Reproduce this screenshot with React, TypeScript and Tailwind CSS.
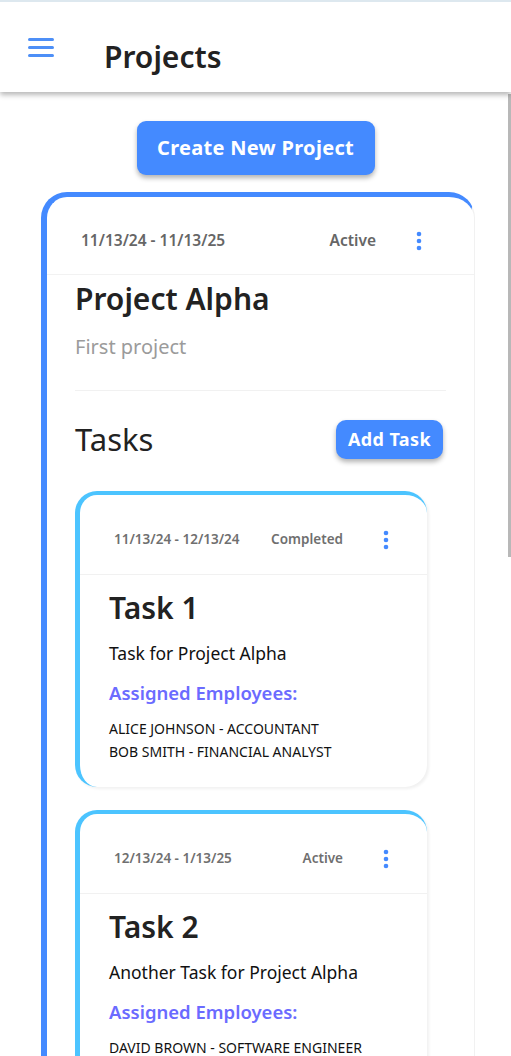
type Task = {
  title: string
  dates: string
  status: string
  description: string
  employees: string[]
}

const tasks: Task[] = [
  {
    title: 'Task 1',
    dates: '11/13/24 - 12/13/24',
    status: 'Completed',
    description: 'Task for Project Alpha',
    employees: ['Alice Johnson - Accountant', 'Bob Smith - Financial Analyst'],
  },
  {
    title: 'Task 2',
    dates: '12/13/24 - 1/13/25',
    status: 'Active',
    description: 'Another Task for Project Alpha',
    employees: ['David Brown - Software Engineer'],
  },
]

function Kebab() {
  return (
    <svg width="6" height="20" viewBox="0 0 6 20" className="text-[#448aff]">
      <circle cx="3" cy="3" r="2.3" fill="currentColor" />
      <circle cx="3" cy="10" r="2.3" fill="currentColor" />
      <circle cx="3" cy="17" r="2.3" fill="currentColor" />
    </svg>
  )
}

function TaskCard({ task }: { task: Task }) {
  return (
    <div className="w-[352px] rounded-[22px] border-l-[5px] border-t-[4px] border-[#4cc4ff] bg-white shadow-[2px_2px_3px_rgba(0,0,0,0.06)]">
      <div className="flex h-[80px] items-center border-b border-[#f1f1f1] pl-[34px] pr-[38px] pt-[10px]">
        <span className="text-[13.5px] font-semibold text-[#6f6f6f]">{task.dates}</span>
        <span className="ml-auto text-[13.5px] font-semibold text-[#6f6f6f]">{task.status}</span>
        <span className="ml-[40px]">
          <Kebab />
        </span>
      </div>
      <div className="pl-[29px] pr-4 pt-[13px] pb-[24px]">
        <h4 className="text-[30px] font-semibold leading-[40px] text-[#222]">{task.title}</h4>
        <p className="mt-[13px] text-[17.5px] leading-[24px] text-[#111]">{task.description}</p>
        <h5 className="mt-[16px] text-[18.5px] font-semibold leading-[24px] text-[#6b6bff]">
          Assigned Employees:
        </h5>
        <ul className="mt-[12px] text-[14px] uppercase leading-[23px] text-[#111]">
          {task.employees.map((e) => (
            <li key={e}>{e}</li>
          ))}
        </ul>
      </div>
    </div>
  )
}

export default function App() {
  return (
    <div
      className="relative h-[1056px] overflow-hidden border-t-2 border-[#dde8ef] bg-white"
      style={{ fontFamily: '"Noto Sans", "Open Sans", sans-serif' }}
    >
      {/* Top bar */}
      <header className="relative z-10 flex h-[90px] items-start bg-white pl-[28px] shadow-[0_3px_5px_rgba(0,0,0,0.28)]">
        <div className="mt-[36px] flex w-[26px] flex-col gap-[5.5px]">
          <span className="h-[2.5px] w-full rounded bg-[#4d8ff7]" />
          <span className="h-[2.5px] w-full rounded bg-[#4d8ff7]" />
          <span className="h-[2.5px] w-full rounded bg-[#4d8ff7]" />
        </div>
        <h1 className="ml-[50px] mt-[35px] text-[30px] font-semibold leading-[40px] text-[#222]">
          Projects
        </h1>
      </header>

      {/* scrollbar thumb */}
      <div className="absolute right-0 top-[92px] h-[463px] w-[3px] bg-[#b8b8b8]" />

      <main className="flex flex-col items-center pt-[29px]">
        <button className="h-[54px] w-[238px] rounded-[9px] bg-[#448aff] text-[20px] font-bold tracking-[0.3px] text-white shadow-[0_3px_5px_rgba(0,0,0,0.3)]">
          Create New Project
        </button>

        <section className="mt-[17px] ml-[5px] w-[434px] rounded-t-[26px] border-l-[6px] border-t-[5px] border-r border-[#448aff] border-r-[#f1f1f1] bg-white">
          <div className="flex h-[78px] items-center border-b border-[#f2f2f2] pl-[34px] pr-[52px] pt-[10px]">
            <span className="text-[15.5px] font-semibold text-[#666]">11/13/24 - 11/13/25</span>
            <span className="ml-auto text-[15.5px] font-semibold text-[#666]">Active</span>
            <span className="ml-[40px]">
              <Kebab />
            </span>
          </div>

          <div className="pl-[28px] pr-[28px]">
            <h2 className="mt-[4px] text-[30px] font-semibold leading-[40px] text-[#222]">Project Alpha</h2>
            <p className="mt-[14px] text-[20px] leading-[28px] text-[#9b9b9b]">First project</p>
            <div className="mt-[29px] border-t border-[#f1f1f1]" />

            <div className="mt-[28px] flex items-center justify-between">
              <h3 className="text-[31px] leading-[40px] text-[#222]">Tasks</h3>
              <button className="mr-[3px] h-[39px] w-[107px] rounded-[10px] bg-[#448aff] text-[18px] font-bold tracking-[0.4px] text-white shadow-[0_3px_5px_rgba(0,0,0,0.3)]">
                Add Task
              </button>
            </div>

            <div className="mt-[32px] flex flex-col gap-[23px] pb-10">
              {tasks.map((t) => (
                <TaskCard key={t.title} task={t} />
              ))}
            </div>
          </div>
        </section>
      </main>
    </div>
  )
}
